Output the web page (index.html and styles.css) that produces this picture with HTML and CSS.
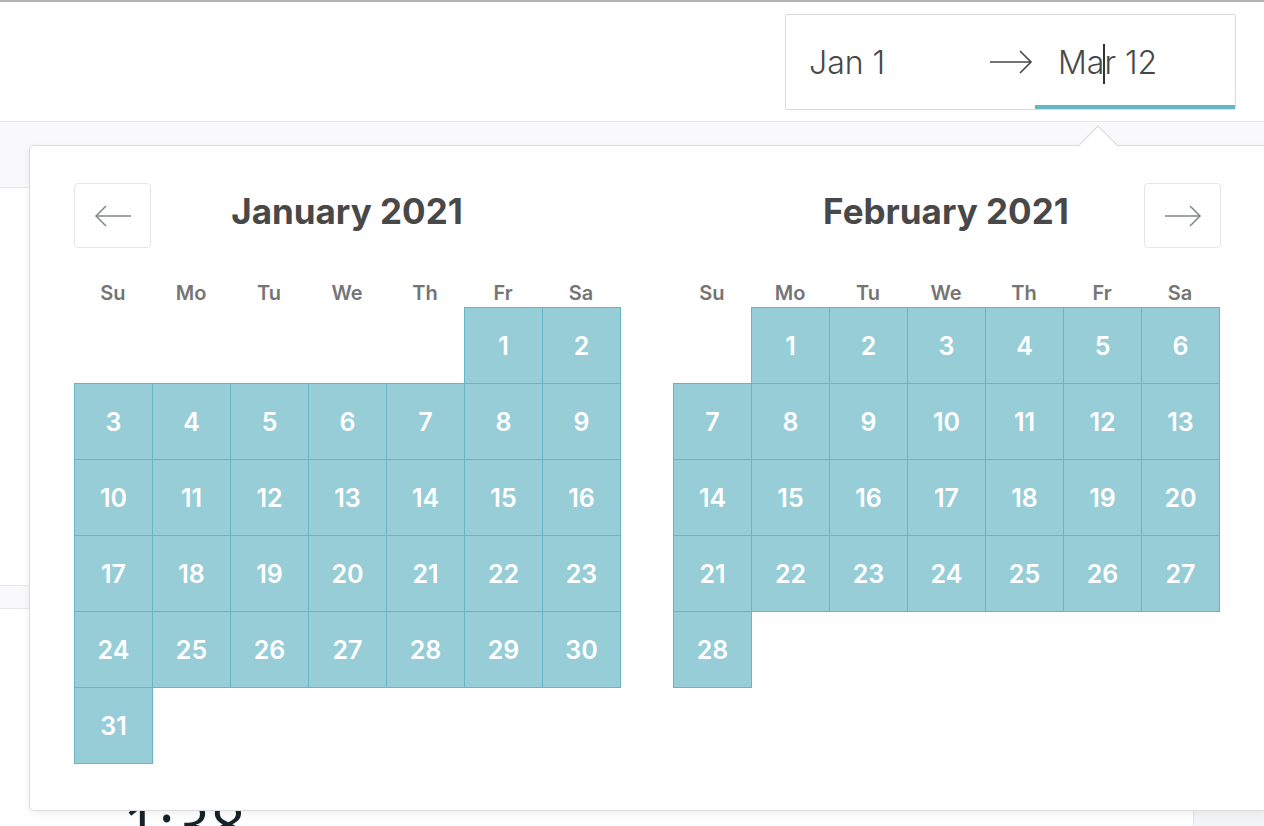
FILE: index.html
```html
<!DOCTYPE html>
<html lang="en">
<head>
  <meta charset="UTF-8">
  <meta name="viewport" content="width=device-width, initial-scale=1.0">
  <title>Date range</title>
  <link rel="stylesheet" href="styles.css">
</head>
<body>

  <div class="topbar">
    <div class="range">
      <div class="range-input">Jan 1</div>
      <div class="range-arrow">
        <svg width="44" height="26" viewBox="0 0 44 26"><path d="M1 13H42M31 2L42 13L31 24" fill="none" stroke="#484848" stroke-width="1.6"/></svg>
      </div>
      <div class="range-input range-input--active">Ma<span class="caret"></span>r 12</div>
    </div>
  </div>
  <div class="subbar"></div>
  <div class="panel"></div>
  <div class="band"></div>
  <div class="stats">
    <div class="stat-value">1:38</div>
    <div class="stat-side"></div>
  </div>

  <!-- date picker popup -->
  <div class="picker">
    <svg class="picker-tip" width="40" height="21" viewBox="0 0 40 21">
      <polygon points="0,21 20,1 40,21" fill="#fff"/>
      <polyline points="0,21 20,1 40,21" fill="none" stroke="#dcdcdc" stroke-width="1.2"/>
    </svg>
    <div class="months">
      <div class="month">
        <div class="month-head">
          <button class="nav-btn">
            <svg width="38" height="24" viewBox="0 0 38 24"><path d="M37 12H2M12 2L2 12L12 22" fill="none" stroke="#82888a" stroke-width="1.5"/></svg>
          </button>
          <div class="caption">January 2021</div>
          <span></span>
        </div>
        <div class="weekdays">
          <span>Su</span><span>Mo</span><span>Tu</span><span>We</span><span>Th</span><span>Fr</span><span>Sa</span>
        </div>
        <div class="days">
          <div></div><div></div><div></div><div></div><div></div>
          <div class="day">1</div><div class="day">2</div>
          <div class="day">3</div><div class="day">4</div><div class="day">5</div><div class="day">6</div><div class="day">7</div><div class="day">8</div><div class="day">9</div>
          <div class="day">10</div><div class="day">11</div><div class="day">12</div><div class="day">13</div><div class="day">14</div><div class="day">15</div><div class="day">16</div>
          <div class="day">17</div><div class="day">18</div><div class="day">19</div><div class="day">20</div><div class="day">21</div><div class="day">22</div><div class="day">23</div>
          <div class="day">24</div><div class="day">25</div><div class="day">26</div><div class="day">27</div><div class="day">28</div><div class="day">29</div><div class="day">30</div>
          <div class="day">31</div>
        </div>
      </div>

      <div class="month">
        <div class="month-head">
          <span></span>
          <div class="caption">February 2021</div>
          <button class="nav-btn nav-btn--next">
            <svg width="38" height="24" viewBox="0 0 38 24"><path d="M1 12H36M26 2L36 12L26 22" fill="none" stroke="#82888a" stroke-width="1.5"/></svg>
          </button>
        </div>
        <div class="weekdays">
          <span>Su</span><span>Mo</span><span>Tu</span><span>We</span><span>Th</span><span>Fr</span><span>Sa</span>
        </div>
        <div class="days">
          <div></div>
          <div class="day">1</div><div class="day">2</div><div class="day">3</div><div class="day">4</div><div class="day">5</div><div class="day">6</div>
          <div class="day">7</div><div class="day">8</div><div class="day">9</div><div class="day">10</div><div class="day">11</div><div class="day">12</div><div class="day">13</div>
          <div class="day">14</div><div class="day">15</div><div class="day">16</div><div class="day">17</div><div class="day">18</div><div class="day">19</div><div class="day">20</div>
          <div class="day">21</div><div class="day">22</div><div class="day">23</div><div class="day">24</div><div class="day">25</div><div class="day">26</div><div class="day">27</div>
          <div class="day">28</div>
        </div>
      </div>
    </div>
  </div>

</body>
</html>
```

FILE: styles.css
```css
html, body {
  height: 826px;
  overflow: hidden;
}

body {
  margin: 0;
  position: relative;
  font-family: 'Inter', 'Noto Sans', sans-serif;
  background-color: #fff;
  color: #484848;
}

.topbar {
  height: 107px;
  padding: 12px 28px 0 0;
  border-top: 2px solid #b4b4b4;
  border-bottom: 1px solid #e6e7ea;
  display: flex;
  justify-content: flex-end;
  align-items: flex-start;
}

.range {
  display: flex;
  align-items: stretch;
  height: 94px;
  border: 1px solid #dbdbdb;
  border-radius: 2px;
  background-color: #fff;
}

.range-input {
  padding-left: 23px;
  padding-top: 4px;
  display: flex;
  align-items: center;
  font-size: 32px;
  font-weight: 300;
  color: #484848;
  border-bottom: 4px solid transparent;
}

.range-input:first-child {
  width: 178px;
}

.range-input--active {
  width: 177px;
  border-bottom-color: #66b6c4;
}

.caret {
  display: inline-block;
  width: 2px;
  height: 40px;
  margin: 0 -1px 0 -1px;
  background-color: #333;
  position: relative;
  top: 2px;
}

.range-arrow {
  width: 48px;
  display: flex;
  align-items: center;
  justify-content: center;
}

.subbar {
  height: 65px;
  background-color: #f9f9fb;
  border-bottom: 1px solid #e6e7ea;
}

.panel {
  height: 397px;
  border-bottom: 1px solid #e6e7ea;
}

.band {
  height: 22px;
  background-color: #f9f9fb;
  border-bottom: 1px solid #e6e7ea;
}

.stats {
  display: flex;
  height: 220px;
}

.stat-value {
  flex: 1;
  padding: 184px 0 0 123px;
  font-family: 'Open Sans', sans-serif;
  font-size: 62px;
  line-height: 62px;
  color: #152428;
}

.stat-side {
  width: 70px;
  background-color: #f3f4f6;
  border-left: 1px solid #e2e3e6;
}

/* popup */

.picker {
  position: absolute;
  left: 29px;
  top: 145px;
  width: 1240px;
  height: 666px;
  box-sizing: border-box;
  padding: 37px 0 0 44px;
  background-color: #fff;
  border: 1px solid #dcdcdc;
  border-radius: 5px;
  box-shadow: 0 3px 10px rgba(0, 0, 0, 0.06);
}

.picker-tip {
  position: absolute;
  top: -21px;
  left: 1048px;
  display: block;
}

.months {
  display: flex;
  gap: 53px;
}

.month {
  width: 546px;
}

.month-head {
  display: grid;
  grid-template-columns: 78px 1fr 78px;
  align-items: center;
  height: 65px;
}

.nav-btn {
  width: 77px;
  height: 65px;
  padding: 0;
  display: flex;
  align-items: center;
  justify-content: center;
  background-color: #fff;
  border: 1px solid #e4e7e7;
  border-radius: 4px;
}

.nav-btn--next {
  justify-self: end;
  margin-right: -2px;
}

.caption {
  text-align: center;
  font-size: 35px;
  font-weight: 700;
  color: #484848;
  padding-bottom: 10px;
}

.weekdays {
  display: grid;
  grid-template-columns: repeat(7, 78px);
  height: 59px;
  box-sizing: border-box;
  padding-top: 35px;
}

.weekdays span {
  text-align: center;
  font-size: 20px;
  line-height: 20px;
  font-weight: 600;
  color: #757575;
}

.days {
  display: grid;
  grid-template-columns: repeat(7, 78px);
  grid-auto-rows: 76px;
}

.day {
  width: 79px;
  height: 77px;
  box-sizing: border-box;
  border: 1px solid #67b5c4;
  background-color: #97cdd7;
  color: #fff;
  font-size: 25px;
  font-weight: 600;
  display: flex;
  align-items: center;
  justify-content: center;
}
```
